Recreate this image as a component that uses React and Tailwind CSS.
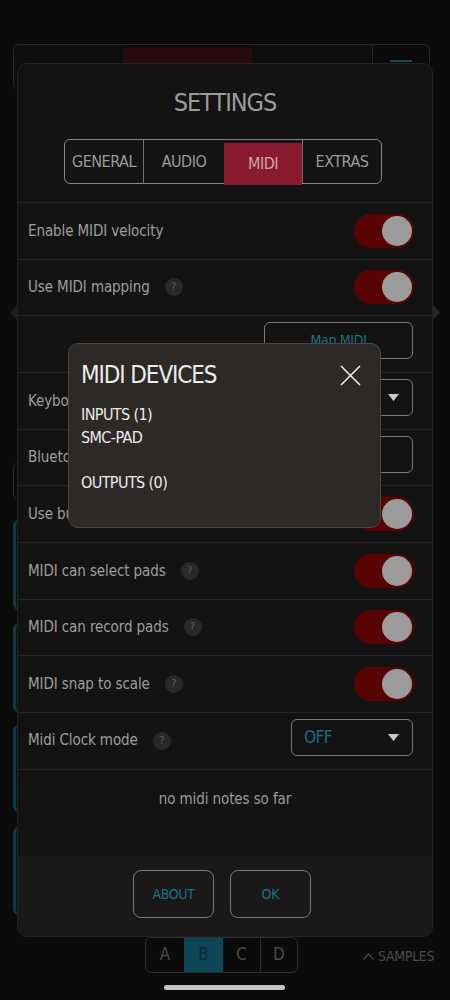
const F = { fontFamily: "'DejaVu Sans Condensed', 'DejaVu Sans', sans-serif" };

function Toggle() {
  return (
    <div className="w-[60px] h-[34px] rounded-full bg-[#5a0303] flex items-center justify-end pr-[2px]">
      <div className="w-[30px] h-[30px] rounded-full bg-[#9b9b9b]" />
    </div>
  );
}

function Q({ ml }) {
  return (
    <div className={`w-[18px] h-[18px] rounded-full bg-[#2a2929] text-[11px] leading-[18px] text-center text-[#5a5a5a] ${ml}`}>?</div>
  );
}

function Row({ children, right, pr = "pr-[18px]" }) {
  return (
    <div className={`h-[56.67px] shrink-0 border-b border-[#262525] flex items-center justify-between pl-[10px] ${pr}`}>
      <div className="flex items-center text-[15px] tracking-[-0.1px] text-[#9e9e9e]">{children}</div>
      {right}
    </div>
  );
}

function Caret() {
  return (
    <svg width="11" height="7" viewBox="0 0 11 7"><path d="M0 0 L11 0 L5.5 7 Z" fill="#c9c9c9" /></svg>
  );
}

export default function App() {
  return (
    <div style={F} className="w-[450px] h-[1000px] relative overflow-hidden bg-[#0b0b0b]">
      {/* background app */}
      <div className="flex flex-col h-full">
        <div className="pt-[44px] px-[13px]">
          <div className="h-[46px] w-[417px] flex border border-[#262626] rounded-[6px] overflow-hidden">
            <div className="w-[109px] bg-[#0e0e0e]" />
            <div className="w-[129px] bg-[#2b0a10] mt-[3px]" />
            <div className="w-[121px] bg-[#0e0e0e] border-r border-[#262626]" />
            <div className="flex-1 flex justify-center pt-[15px]">
              <div className="w-[22px] h-[2px] bg-[#0f4b5c]" />
            </div>
          </div>
        </div>
        <div className="flex justify-between px-[10px] mt-[215px]">
          <svg width="7" height="15" viewBox="0 0 7 15"><path d="M7 0 L0 7.5 L7 15 Z" fill="#1e1e1e" /></svg>
          <svg width="7" height="15" viewBox="0 0 7 15"><path d="M0 0 L7 7.5 L0 15 Z" fill="#262626" /></svg>
        </div>
        <div className="pl-[13px] flex flex-col mt-[142px]">
          <div className="w-[200px] h-[38px] border border-[#2a2a2a] rounded-[6px]" />
          <div className="w-[200px] h-[90px] mt-[20px] border-l-[3px] border-[#0e3a47] rounded-[6px] bg-[#0d1214]" />
          <div className="w-[200px] h-[89px] mt-[13px] border-l-[3px] border-[#0e3a47] rounded-[6px] bg-[#0d1214]" />
          <div className="w-[200px] h-[87px] mt-[13px] border-l-[3px] border-[#0e3a47] rounded-[6px] bg-[#0d1214]" />
          <div className="w-[200px] h-[88px] mt-[15px] border-l-[3px] border-[#0e3a47] rounded-[6px] bg-[#0d1214]" />
        </div>
        <div className="mt-[22px] flex items-center relative h-[36px]">
          <div className="ml-[145px] w-[153px] h-[36px] flex border border-[#2c2c2c] rounded-[6px] overflow-hidden text-[17px] text-[#4a4a4a]">
            <div className="w-[38px] flex items-center justify-center">A</div>
            <div className="w-[39px] flex items-center justify-center bg-[#0d4657] text-[#082a34]">B</div>
            <div className="w-[38px] flex items-center justify-center border-r border-[#2c2c2c]">C</div>
            <div className="flex-1 flex items-center justify-center">D</div>
          </div>
          <div className="ml-[65px] mt-[2px] flex items-center gap-[4px] text-[14px] tracking-[-0.3px] text-[#4a4a4a]">
            <svg width="11" height="7" viewBox="0 0 11 7"><path d="M0.5 6.5 L5.5 1 L10.5 6.5" stroke="#4a4a4a" strokeWidth="1.2" fill="none" /></svg>
            <span>SAMPLES</span>
          </div>
        </div>
        <div className="mt-[12px] ml-[164px] w-[121px] h-[5px] rounded-full bg-[#c4c4c4]" />
      </div>

      {/* settings modal */}
      <div className="absolute left-[17px] top-[63px] w-[416px] h-[874px] rounded-[10px] bg-[#141313] border border-[#232222] flex flex-col overflow-hidden">
        <div className="pt-[24px] h-[54px] text-center text-[25px] leading-[30px] tracking-[-1px] text-[#9a9a9a]">SETTINGS</div>
        <div className="mt-[21px] ml-[46px] w-[318px] h-[45px] flex border border-[#858585] rounded-[6px] text-[16px] tracking-[-0.5px] text-[#9a9a9a]">
          <div className="w-[79px] flex items-center justify-center border-r border-[#707070]">GENERAL</div>
          <div className="w-[80px] flex items-center justify-center">AUDIO</div>
          <div className="w-[78px] mt-[3px] -mb-[2px] flex items-center justify-center bg-[#8a1a2d] text-[#c9a7ae]">MIDI</div>
          <div className="flex-1 flex items-center justify-center border-l border-[#707070]">EXTRAS</div>
        </div>
        <div className="mt-[18px] border-t border-[#262525]" />
        <Row right={<Toggle />}>Enable MIDI velocity</Row>
        <Row right={<Toggle />}>Use MIDI mapping<Q ml="ml-[15px]" /></Row>
        <Row pr="pr-[19px]" right={
          <div className="self-start mt-[6px] w-[149px] h-[37px] border border-[#7a7a7a] rounded-[6px] flex items-center justify-center text-[14px] tracking-[-0.3px] text-[#1d6f86]">Map MIDI</div>
        }>{""}</Row>
        <Row pr="pr-[19px]" right={
          <div className="self-start mt-[6px] w-[122px] h-[37px] border border-[#7a7a7a] rounded-[6px] flex items-center justify-between pl-[13px] pr-[13px] text-[15px] text-[#1d6f86]"><span>DEFAULT</span><Caret /></div>
        }>Keyboard mode</Row>
        <Row pr="pr-[19px]" right={
          <div className="self-start mt-[6px] w-[149px] h-[37px] border border-[#7a7a7a] rounded-[6px] flex items-center justify-center text-[14px] text-[#1d6f86]">Connect</div>
        }>Bluetooth MIDI</Row>
        <Row right={<Toggle />}>Use built-in keyboard</Row>
        <Row right={<Toggle />}>MIDI can select pads<Q ml="ml-[15px]" /></Row>
        <Row right={<Toggle />}>MIDI can record pads<Q ml="ml-[15px]" /></Row>
        <Row right={<Toggle />}>MIDI snap to scale<Q ml="ml-[15px]" /></Row>
        <Row pr="pr-[19px]" right={
          <div className="self-start mt-[6px] w-[122px] h-[37px] border border-[#7a7a7a] rounded-[6px] flex items-center justify-between pl-[12px] pr-[13px] text-[17px] tracking-[-0.5px] text-[#1a6b80]"><span>OFF</span><Caret /></div>
        }>Midi Clock mode<Q ml="ml-[15px]" /></Row>
        <div className="h-[86.7px] shrink-0 pt-[18px] text-center text-[15px] leading-[22px] tracking-[-0.1px] text-[#9a9a9a]">no midi notes so far</div>
        <div className="flex-1 bg-[#1a1918] flex justify-center gap-[16px] pt-[14px] pr-[6px]">
          <div className="w-[81px] h-[48px] border border-[#7a7a7a] rounded-[8px] flex items-center justify-center text-[14px] tracking-[-0.4px] text-[#1d6f86]">ABOUT</div>
          <div className="w-[81px] h-[48px] border border-[#7a7a7a] rounded-[8px] flex items-center justify-center text-[14px] text-[#1d6f86]">OK</div>
        </div>
      </div>

      {/* midi devices popup */}
      <div className="absolute left-[68px] top-[343px] w-[313px] h-[185px] rounded-[10px] bg-[#2d2927] border border-[#4a4543] px-[12px] pt-[16px] text-[#ececec]">
        <div className="flex items-start justify-between">
          <div className="text-[24px] leading-[30px] tracking-[-1.1px]">MIDI DEVICES</div>
          <svg className="mt-[5px] mr-[7px]" width="21" height="21" viewBox="0 0 21 21"><path d="M1 1 L20 20 M20 1 L1 20" stroke="#ededed" strokeWidth="1.6" /></svg>
        </div>
        <div className="mt-[14px] text-[16px] leading-[22.7px] tracking-[-0.6px]">
          <div>INPUTS (1)</div>
          <div>SMC-PAD</div>
          <div className="h-[22.7px]" />
          <div>OUTPUTS (0)</div>
        </div>
      </div>
    </div>
  );
}
